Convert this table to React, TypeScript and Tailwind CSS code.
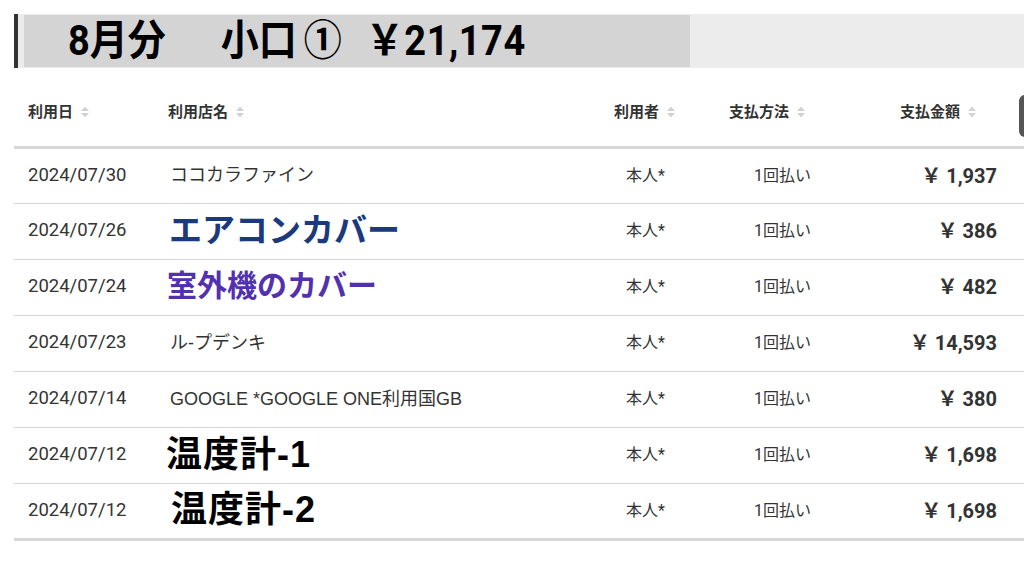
import React from "react";

interface Row {
  date: string;
  name: string;
  nameClass?: string;
  amount: string;
}

const rows: Row[] = [
  { date: "2024/07/30", name: "ココカラファイン", amount: "1,937" },
  {
    date: "2024/07/26",
    name: "エアコンカバー",
    nameClass: "text-[33px] font-bold text-[#1b3a7d] leading-none -ml-[1px]",
    amount: "386",
  },
  {
    date: "2024/07/24",
    name: "室外機のカバー",
    nameClass: "text-[30px] font-bold text-[#5131b0] leading-none -ml-[3px]",
    amount: "482",
  },
  { date: "2024/07/23", name: "ル-プデンキ", amount: "14,593" },
  { date: "2024/07/14", name: "GOOGLE *GOOGLE ONE利用国GB", amount: "380" },
  {
    date: "2024/07/12",
    name: "温度計-1",
    nameClass: "text-[36px] font-bold text-black leading-none -ml-[4px] tracking-[1px]",
    amount: "1,698",
  },
  {
    date: "2024/07/12",
    name: "温度計-2",
    nameClass: "text-[36px] font-bold text-black leading-none ml-[1px] tracking-[1px]",
    amount: "1,698",
  },
];

function SortIcon() {
  return (
    <svg width="8" height="12" viewBox="0 0 8 12" className="ml-[8px] inline-block">
      <path d="M0 5 L4 0.5 L8 5 Z" fill="#d2d2d2" />
      <path d="M0 7 L4 11.5 L8 7 Z" fill="#d2d2d2" />
    </svg>
  );
}

function Th({ label, className }: { label: string; className: string }) {
  return (
    <th className={"align-middle pt-[2px] text-left font-bold text-[15px] text-[#333] " + className}>
      <span className="inline-flex items-center">
        {label}
        <SortIcon />
      </span>
    </th>
  );
}

export default function App() {
  return (
    <div
      className="relative w-[1024px] h-[561px] overflow-hidden bg-white pt-[14px]"
      style={{ fontFamily: "Roboto, 'Noto Sans CJK JP', sans-serif" }}
    >
      {/* 見出し */}
      <div className="ml-[14px] flex h-[54px] border-l-4 border-[#333] bg-[#ececec] pl-[6px]">
        <div className="my-[1px] flex w-[666px] items-center bg-[#d4d4d4] pl-[44px]">
          <h1 className="origin-center scale-y-[1.1] whitespace-nowrap text-[38px] font-bold leading-none text-black">
            <span>8月分</span>
            <span className="inline-block w-[55px]">　</span>
            <span>小口</span>
            <span className="inline-block w-[7px]"> </span>
            <span>①</span>
            <span className="inline-block w-[24px]"> </span>
            <span className="tracking-[0.5px]">￥21,174</span>
          </h1>
        </div>
      </div>

      {/* 明細 */}
      <table className="ml-[14px] mt-[8px] w-[1010px] table-fixed border-collapse">
        <colgroup>
          <col className="w-[140px]" />
          <col className="w-[440px]" />
          <col className="w-[106px]" />
          <col className="w-[150px]" />
          <col className="w-[174px]" />
        </colgroup>
        <thead>
          <tr className="h-[71px] border-b-[3px] border-[#d6d6d6]">
            <Th label="利用日" className="pl-[14px]" />
            <Th label="利用店名" className="pl-[14px]" />
            <Th label="利用者" className="pl-[20px]" />
            <Th label="支払方法" className="pl-[29px]" />
            <Th label="支払金額" className="pl-[50px]" />
          </tr>
        </thead>
        <tbody>
          {rows.map((r, i) => (
            <tr
              key={i}
              className={
                "h-[56px] " +
                (i === rows.length - 1
                  ? "border-b-[3px] border-[#d6d6d6]"
                  : "border-b border-[#d4d4d4]")
              }
            >
              <td className="pl-[14px] text-[18.5px] text-[#333] whitespace-nowrap">{r.date}</td>
              <td
                className="pl-[16px] whitespace-nowrap"
                style={{ fontFamily: "'Liberation Sans', 'Noto Sans CJK JP', sans-serif" }}
              >
                <span className={r.nameClass ?? "text-[18px] text-[#333]"}>{r.name}</span>
              </td>
              <td className="pl-[32px] text-[16px] text-[#333] whitespace-nowrap">本人*</td>
              <td className="pl-[54px] text-[16px] text-[#333] whitespace-nowrap">1回払い</td>
              <td className="pr-[27px] text-right text-[20px] font-bold text-[#333] whitespace-nowrap">
                ￥ {r.amount}
              </td>
            </tr>
          ))}
        </tbody>
      </table>

      {/* 右端のボタン */}
      <div className="absolute right-[-8px] top-[95px] h-[42px] w-[13px] rounded-l-md bg-[#555]" />
    </div>
  );
}
